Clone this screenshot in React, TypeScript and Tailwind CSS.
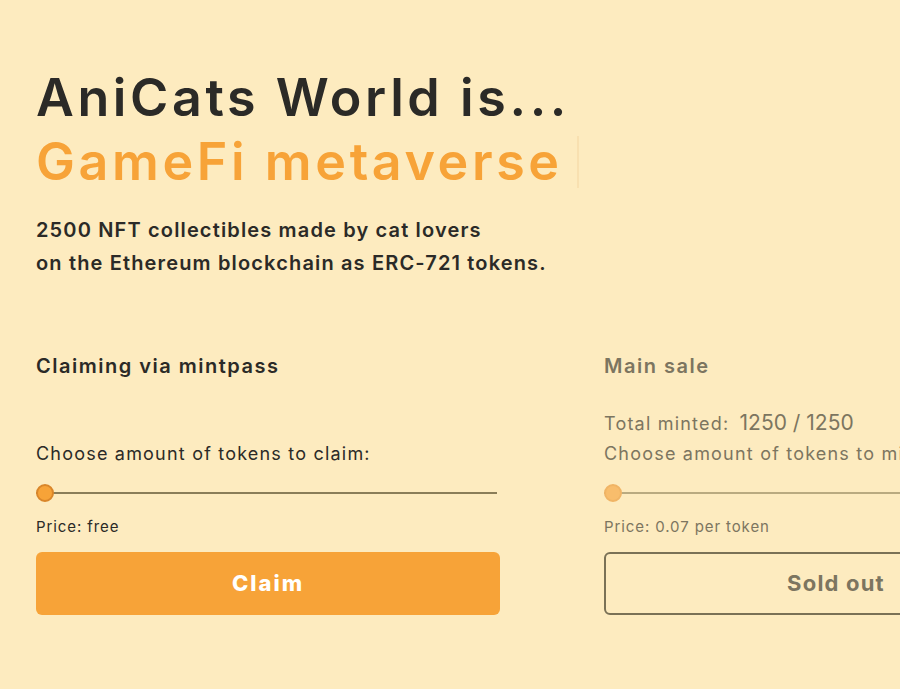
import React from "react";

const font = { fontFamily: "Inter, 'Open Sans', sans-serif" };

type SaleProps = {
  title: string;
  disabled?: boolean;
  minted?: string;
  label: string;
  price: string;
  button: string;
};

const Slider = ({ disabled }: { disabled?: boolean }) => (
  <div className="relative h-5 flex items-center">
    <div className={`h-[2px] w-[461px] ${disabled ? "bg-[#b9aa80]" : "bg-[#8a7d58]"}`} />
    <div
      className={`absolute left-0 top-[1px] w-[18px] h-[18px] rounded-full border-2 ${
        disabled ? "bg-[#f8bd6c] border-[#f0b465]" : "bg-[#f7a338] border-[#d9862a]"
      }`}
    />
  </div>
);

const SaleBlock = ({ title, disabled, minted, label, price, button }: SaleProps) => (
  <div className={`w-[464px] shrink-0 flex flex-col ${disabled ? "text-[#7c7560]" : "text-[#2b2a27]"}`}>
    <h3 className="text-[20px] font-semibold leading-7 h-[56px] tracking-[1.5px]">{title}</h3>
    <div className="h-[28px] flex items-end">
      {minted && (
        <p className="text-[18px] leading-6 tracking-[1.2px]">
          Total minted: <span className="text-[21px] ml-1 tracking-normal">{minted}</span>
        </p>
      )}
    </div>
    <p className="text-[18px] leading-6 mt-[6px] whitespace-nowrap tracking-[1.2px]">{label}</p>
    <div className="mt-[17px]">
      <Slider disabled={disabled} />
    </div>
    <p className="text-[15px] leading-5 mt-[14px] tracking-[0.9px]">{price}</p>
    {disabled ? (
      <button className="mt-[15px] h-[63px] rounded-md border-2 border-[#7a7156] text-[22px] font-bold tracking-[1.2px] text-[#7c7560]">
        {button}
      </button>
    ) : (
      <button className="mt-[15px] h-[63px] rounded-md bg-[#f7a338] text-[22px] font-extrabold tracking-[2px] text-white">
        {button}
      </button>
    )}
  </div>
);

export default function App() {
  return (
    <div className="w-[900px] h-[689px] overflow-hidden bg-[#fdebbf] pl-9 pt-[66px]" style={font}>
      <h1 className="text-[52px] font-semibold leading-[64px] tracking-[3.6px]">
        <span className="text-[#2b2a27]">AniCats World is...</span>
        <br />
        <span className="text-[#f7a338]">GameFi metaverse</span>
        <span className="inline-block w-[2px] h-[52px] bg-[#f8e0b0] ml-[14px] align-[-8px]" />
      </h1>
      <p className="mt-5 text-[20px] font-semibold leading-[33px] tracking-[1.15px] text-[#2b2a27]">
        2500 NFT collectibles made by cat lovers
        <br />
        on the Ethereum blockchain as ERC-721 tokens.
      </p>
      <div className="flex gap-[104px] mt-[72px]">
        <SaleBlock
          title="Claiming via mintpass"
          label="Choose amount of tokens to claim:"
          price="Price: free"
          button="Claim"
        />
        <SaleBlock
          title="Main sale"
          disabled
          minted="1250 / 1250"
          label="Choose amount of tokens to mint:"
          price="Price: 0.07 per token"
          button="Sold out"
        />
      </div>
    </div>
  );
}
